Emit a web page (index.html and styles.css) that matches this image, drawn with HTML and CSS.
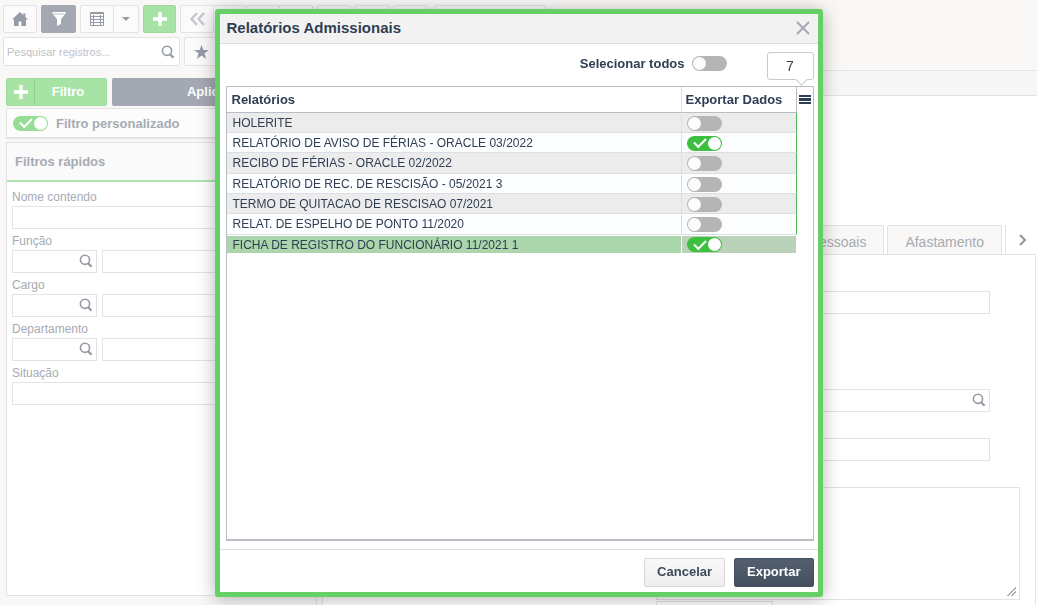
FILE: index.html
```
<!DOCTYPE html>
<html lang="pt-BR">
<head>
  <meta charset="UTF-8">
  <title>Relatórios Admissionais</title>
  <link rel="stylesheet" href="styles.css">
</head>

<body>

<svg class="sprite" width="0" height="0">
  <symbol id="lupa" viewBox="0 0 14 14">
    <circle cx="6" cy="5.8" r="4.6" fill="none" stroke="currentColor" stroke-width="1.6"/>
    <path d="M9 9.2l3.6 3.6" stroke="currentColor" stroke-width="2.2"/>
  </symbol>
  <symbol id="mais" viewBox="0 0 14 14">
    <path d="M7 0v14M0 7h14" stroke="currentColor" stroke-width="3.4"/>
  </symbol>
</svg>

<div class="page">
  <header class="toolbar">
    <div class="toolbar-row">
      <button class="tool" aria-label="Início">
        <svg width="16" height="14" viewBox="0 0 16 14"><path d="M8 0L0 7.6h2V14h4.6V9.4h2.8V14H14V7.6h2L13.3 5V1.2h-2v2z" fill="currentColor"/></svg>
      </button>
      <button class="tool tool-active" aria-label="Filtro">
        <svg width="14" height="14" viewBox="0 0 14 14"><path d="M.5 0h13v1.6L9 7.2V12l-4 2V7.2L.5 1.6z" fill="currentColor"/><path d="M1.5 2h10" stroke="#a3a8b2" stroke-width=".8"/></svg>
      </button>
      <div class="tool-group">
        <button class="tool" aria-label="Grade">
          <svg width="14" height="14" viewBox="0 0 14 14"><path d="M.5.5h13v13H.5zM0 1.5h14M0 4.5h14M0 7.5h14M0 10.5h14M3.5 3v11M10.5 3v11" fill="none" stroke="currentColor"/></svg>
        </button>
        <button class="tool tool-small" aria-label="Opções">
          <svg width="8" height="4" viewBox="0 0 8 4"><path d="M0 0h8L4 4z" fill="currentColor"/></svg>
        </button>
      </div>
      <button class="tool tool-add" aria-label="Adicionar">
        <svg width="14" height="14"><use href="#mais"/></svg>
      </button>
      <div class="tool-group">
        <button class="tool tool-off" aria-label="Primeiro">
          <svg width="15" height="14" viewBox="0 0 15 14"><path d="M7 1L1.6 7 7 13M14 1L8.6 7l5.4 6" fill="none" stroke="currentColor" stroke-width="2.6"/></svg>
        </button>
        <button class="tool" aria-label="Anterior"></button>
        <button class="tool" aria-label="Próximo"></button>
        <button class="tool" aria-label="Último"></button>
      </div>
      <button class="tool" aria-label="Editar"></button>
      <button class="tool" aria-label="Salvar"></button>
      <button class="tool" aria-label="Excluir"></button>
      <button class="tool tool-wide" aria-label="Ações"></button>
    </div>
    <div class="toolbar-row">
      <div class="search">
        <input type="text" aria-label="Pesquisar registros" placeholder="Pesquisar registros...">
        <svg width="14" height="14"><use href="#lupa"/></svg>
      </div>
      <div class="tool-group">
        <button class="tool" aria-label="Favoritos">
          <svg width="15" height="14" viewBox="0 0 15 14"><path d="M7.5 0l1.9 5H15l-4.5 3.3L12.200 14l-4.700-3.400L2.800 14l1.700-5.700L0 5h5.600z" fill="currentColor"/></svg>
        </button>
        <button class="tool" aria-label="Atualizar"></button>
      </div>
    </div>
  </header>

  <div class="content">
    <aside class="sidebar">
      <div class="filter-actions">
        <button class="btn-filtro"><svg width="14" height="14"><use href="#mais"/></svg><span>Filtro</span></button>
        <button class="btn-aplicar">Aplicar</button>
      </div>
      <label class="custom-filter">
        <input type="checkbox" class="switch switch-faded" checked>
        Filtro personalizado
      </label>
      <section class="quick">
        <h2>Filtros rápidos</h2>
        <div class="quick-fields">
          <label for="nome">Nome contendo</label>
          <input type="text" id="nome" class="field">
          <label for="funcao">Função</label>
          <div class="lookup">
            <div class="code"><input type="text" id="funcao" class="field"><svg width="14" height="14"><use href="#lupa"/></svg></div>
            <input type="text" class="field" aria-label="Descrição da função">
          </div>
          <label for="cargo">Cargo</label>
          <div class="lookup">
            <div class="code"><input type="text" id="cargo" class="field"><svg width="14" height="14"><use href="#lupa"/></svg></div>
            <input type="text" class="field" aria-label="Descrição do cargo">
          </div>
          <label for="departamento">Departamento</label>
          <div class="lookup">
            <div class="code"><input type="text" id="departamento" class="field"><svg width="14" height="14"><use href="#lupa"/></svg></div>
            <input type="text" class="field" aria-label="Descrição do departamento">
          </div>
          <label for="situacao">Situação</label>
          <input type="text" id="situacao" class="field">
        </div>
      </section>
    </aside>

    <main class="record">
      <div class="band"></div>
      <nav class="tabs">
        <a href="#" class="tab">Dados Pessoais</a>
        <a href="#" class="tab">Afastamento</a>
        <button class="tab-next" aria-label="Próximas abas">
          <svg width="8" height="12" viewBox="0 0 8 12"><path d="M1 1l5 5-5 5" fill="none" stroke="currentColor" stroke-width="2.2"/></svg>
        </button>
      </nav>
      <div class="record-panel">
        <div class="record-fields">
          <input type="text" class="field" aria-label="Nome">
          <input type="text" class="field field-short" aria-label="Código">
          <div class="code"><input type="text" class="field" aria-label="Empresa"><svg width="14" height="14"><use href="#lupa"/></svg></div>
          <input type="text" class="field" aria-label="Filial">
          <textarea class="field notes" aria-label="Observações"></textarea>
          <input type="text" class="field field-last" aria-label="Data">
        </div>
      </div>
    </main>
  </div>
</div>

<div class="overlay">
  <div class="modal" role="dialog" aria-labelledby="titulo">
    <div class="modal-header">
      <h1 id="titulo">Relatórios Admissionais</h1>
      <button class="close" aria-label="Fechar">
        <svg width="14" height="14" viewBox="0 0 14 14"><path d="M1 1l12 12M13 1L1 13" stroke="currentColor" stroke-width="2"/></svg>
      </button>
    </div>

    <div class="modal-top">
      <label for="todos">Selecionar todos</label>
      <input type="checkbox" id="todos" class="switch">
      <div class="count">7</div>
    </div>

    <div class="grid">
      <table>
        <thead>
          <tr>
            <th>Relatórios</th>
            <th class="col-export">Exportar Dados</th>
            <th class="col-menu">
              <button aria-label="Colunas"><svg width="12" height="9" viewBox="0 0 12 9"><path d="M0 0h12v2H0zM0 3h12v3H0zM0 7h12v2H0z" fill="currentColor"/></svg></button>
            </th>
          </tr>
        </thead>
        <tbody>
          <tr><td>HOLERITE</td><td><input type="checkbox" class="switch" aria-label="Exportar HOLERITE"></td></tr>
          <tr><td>RELATÓRIO DE AVISO DE FÉRIAS - ORACLE 03/2022</td><td><input type="checkbox" class="switch" aria-label="Exportar aviso de férias" checked></td></tr>
          <tr><td>RECIBO DE FÉRIAS - ORACLE 02/2022</td><td><input type="checkbox" class="switch" aria-label="Exportar recibo de férias"></td></tr>
          <tr><td>RELATÓRIO DE REC. DE RESCISÃO - 05/2021 3</td><td><input type="checkbox" class="switch" aria-label="Exportar rec. de rescisão"></td></tr>
          <tr><td>TERMO DE QUITACAO DE RESCISAO 07/2021</td><td><input type="checkbox" class="switch" aria-label="Exportar termo de quitação"></td></tr>
          <tr><td>RELAT. DE ESPELHO DE PONTO 11/2020</td><td><input type="checkbox" class="switch" aria-label="Exportar espelho de ponto"></td></tr>
          <tr class="selected"><td>FICHA DE REGISTRO DO FUNCIONÁRIO 11/2021 1</td><td><input type="checkbox" class="switch" aria-label="Exportar ficha de registro" checked></td></tr>
        </tbody>
      </table>
    </div>

    <div class="modal-footer">
      <button class="btn btn-cancelar">Cancelar</button>
      <button class="btn btn-exportar">Exportar</button>
    </div>
  </div>
</div>

</body>
</html>
```

FILE: styles.css
```
* {
  box-sizing: border-box;
}
body {
  margin: 0;
  background: #f9f8f7;
  font-family: "Liberation Sans", Arial, sans-serif;
  font-size: 12px;
  color: #2f3e52;
}
h1, h2 {
  margin: 0;
}
button, input, textarea {
  font-family: inherit;
  margin: 0;
}
svg {
  display: block;
}
.sprite {
  position: absolute;
}
.page {
  height: 100vh;
  display: flex;
  flex-direction: column;
  overflow: hidden;
  color: #a6abb3;
}

/* toolbar */
.toolbar {
  display: flex;
  flex-direction: column;
  gap: 4px;
  padding: 5px 3px 4px;
}
.toolbar-row {
  display: flex;
  gap: 4px;
}
.tool-group {
  display: flex;
}
.tool {
  display: flex;
  align-items: center;
  justify-content: center;
  width: 34px;
  min-height: 28px;
  padding: 0;
  border: 1px solid #e3e3e3;
  border-radius: 2px;
  background: #fbfbfb;
  color: #959ba6;
}
.tool-group .tool + .tool {
  margin-left: -1px;
}
.tool-group .tool-small {
  width: 26px;
}
.tool-active {
  width: 35px;
  background: #a3a8b2;
  border-color: #a3a8b2;
  color: #fff;
}
.tool-add {
  width: 33px;
  background: #a8e3a6;
  border-color: #9cda9a;
  color: #fff;
}
.tool-off {
  color: #c6cad0;
}
.tool-wide {
  width: 110px;
  margin-left: 4px;
}
.search {
  display: flex;
  align-items: center;
  width: 177px;
  height: 29px;
  padding: 0 4px 0 3px;
  border: 1px solid #e3e3e3;
  border-radius: 2px;
  background: #fff;
  color: #959ba6;
}
.search input {
  flex: 1;
  min-width: 0;
  padding: 0;
  border: none;
  background: none;
  font-size: 11px;
}
.search input::placeholder {
  color: #bfc2c6;
}

/* filtros */
.content {
  flex: 1;
  min-height: 0;
  display: flex;
  gap: 5px;
}
.sidebar {
  display: flex;
  flex-direction: column;
  width: 317px;
  padding: 8px 0 9px 6px;
  border-right: 1px solid #e3e3e3;
}
.filter-actions {
  display: flex;
  gap: 5px;
  height: 28px;
}
.filter-actions button {
  border-radius: 2px;
  color: #fff;
  font-size: 13px;
  font-weight: bold;
}
.btn-filtro {
  display: flex;
  align-items: center;
  width: 101px;
  padding: 0 5px 0 0;
  border: 1px solid #9fdd9d;
  background: #a8e3a6;
}
.btn-filtro svg {
  margin: 0 6px 0 7px;
}
.btn-filtro span {
  flex: 1;
  line-height: 26px;
  border-left: 1px solid #8fd08d;
}
.btn-aplicar {
  flex: 1;
  padding: 0 10px 2px 0;
  border: none;
  background: #a3a8b2;
}
.custom-filter {
  display: flex;
  align-items: center;
  gap: 8px;
  height: 31px;
  margin: 2px 0 3px;
  padding-left: 6px;
  border: 1px solid #e3e3e3;
  border-bottom-width: 2px;
  background: #fcfcfc;
  font-size: 13px;
  font-weight: bold;
}
.quick {
  flex: 1;
  border: 1px solid #e3e3e3;
  border-right: none;
  background: #fff;
}
.quick h2 {
  padding-left: 8px;
  border-bottom: 2px solid #aee3ae;
  background: #fafafa;
  font-size: 13px;
  line-height: 37px;
}
.quick-fields {
  display: flex;
  flex-direction: column;
  padding: 3px 5px;
}
.quick-fields label {
  height: 21px;
  line-height: 24px;
}
.field {
  width: 100%;
  height: 23px;
  border: 1px solid #e3e3e3;
  background: #fff;
}
.lookup {
  display: flex;
  gap: 5px;
}
.code {
  display: grid;
  align-items: center;
  color: #959ba6;
}
.code > * {
  grid-area: 1 / 1;
}
.code svg {
  justify-self: end;
  margin: 0 4px 2px 0;
}
.lookup .code {
  flex: 0 0 85px;
}

/* cadastro */
.record {
  flex: 1;
  min-width: 0;
  display: flex;
  flex-direction: column;
  background: #fff;
  border-left: 1px solid #e3e3e3;
}
.band {
  flex: 0 0 26px;
  margin-bottom: 129px;
  border: solid #e3e3e3;
  border-width: 1px 0;
  background: #f7f7f7;
}
.tabs {
  display: flex;
  justify-content: flex-end;
  gap: 3px;
  height: 29px;
}
.tab {
  padding: 0 17px;
  border: 1px solid #e3e3e3;
  border-bottom: none;
  border-radius: 2px 2px 0 0;
  background: #f9f8f7;
  color: #a6abb3;
  font-size: 14px;
  line-height: 32px;
  text-decoration: none;
}
.tab-next {
  width: 32px;
  padding: 0 0 0 13px;
  border: none;
  border-left: 1px solid #e3e3e3;
  background: #fff;
  color: #959ba6;
}
.record-panel {
  flex: 1;
  min-height: 0;
  display: grid;
  grid-template-columns: 333px 1fr;
  margin-right: 1px;
  border: solid #e3e3e3;
  border-width: 1px 1px 0 0;
}
.record-fields {
  grid-column: 2;
  display: flex;
  flex-direction: column;
  gap: 26px;
  padding: 36px 45px 0 0;
}
.record-fields .field-short {
  width: 30%;
}
.record-fields .notes {
  flex: none;
  width: calc(100% + 30px);
  height: 113px;
}
.notes::-webkit-resizer {
  background: linear-gradient(135deg, #fff 48%, #aaa 48%, #aaa 56%, #fff 56%, #fff 72%, #aaa 72%, #aaa 80%, #fff 80%) center / 9px 9px no-repeat;
}
.record-fields .field-last {
  flex: none;
  width: 117px;
  margin-top: -25px;
}

/* chave liga/desliga */
.switch {
  appearance: none;
  display: flex;
  align-items: center;
  flex: none;
  width: 35px;
  height: 15px;
  padding: 1px;
  border-radius: 8px;
  background: #b5b5b5;
}
.switch::after {
  content: "";
  width: 13px;
  height: 13px;
  border-radius: 50%;
  background: #fcfcfc;
}
.switch:checked {
  justify-content: space-between;
  padding-left: 7px;
  background: #3dbf40;
}
.switch:checked::before {
  content: "";
  width: 10px;
  height: 5px;
  margin-bottom: 3px;
  border: solid #fff;
  border-width: 0 0 2px 2px;
  transform: rotate(-45deg);
}
.switch:checked::after {
  background: #fff;
}
.switch-faded:checked {
  background: #97dd96;
}

/* modal */
.overlay {
  position: fixed;
  inset: 0;
  display: flex;
  justify-content: center;
  padding: 9px 8px 8px;
}
.modal {
  display: flex;
  flex-direction: column;
  width: 100%;
  max-width: 608px;
  border: 5px solid #66cf66;
  border-radius: 3px;
  background: #fff;
  box-shadow: 0 2px 18px rgba(0, 0, 0, 0.3);
}
.modal-header {
  display: flex;
  align-items: center;
  justify-content: space-between;
  height: 30px;
  padding: 0 8px 2px 7px;
  border-bottom: 1px solid #dedede;
  background: #f2f2f2;
}
.modal-header h1 {
  font-size: 15px;
}
.close {
  padding: 0;
  border: none;
  background: none;
  color: #a3a8b2;
}
.modal-top {
  display: flex;
  align-items: flex-start;
  justify-content: flex-end;
  height: 42px;
  padding: 8px 4px 0 6px;
}
.modal-top label {
  margin-right: 7px;
  font-size: 13px;
  font-weight: bold;
  line-height: 23px;
}
.modal-top .switch {
  margin-top: 4px;
}
.count {
  position: relative;
  width: 47px;
  height: 28px;
  margin-left: 40px;
  border: 1px solid #c9c9c9;
  border-radius: 3px;
  font-size: 14px;
  line-height: 27px;
  text-align: center;
}
.count::after {
  content: "";
  position: absolute;
  right: 7px;
  bottom: -5px;
  width: 8px;
  height: 8px;
  border: solid #c9c9c9;
  border-width: 0 1px 1px 0;
  background: #fff;
  transform: rotate(45deg);
}
.grid {
  flex: 1;
  margin: 0 4px 8px 6px;
  border: 1px solid #b9bec5;
  border-bottom-width: 2px;
}
table {
  width: 100%;
  border-collapse: separate;
  border-spacing: 0;
  table-layout: fixed;
}
th {
  height: 26px;
  padding: 0 4px 0 5px;
  border-right: 1px solid #dcdfe3;
  border-bottom: 1px solid #b9bec5;
  font-size: 13px;
  text-align: left;
}
.col-export {
  width: 115px;
  padding-left: 4px;
  border-right-color: #b9bec5;
}
.col-menu {
  width: 16px;
  padding: 0 0 2px 2px;
  border: none;
}
.col-menu button {
  display: block;
  padding: 0;
  border: none;
  background: none;
  color: #2f3e52;
}
td {
  height: 20px;
  padding: 0 5px;
  border-right: 1px solid #dcdfe3;
  border-bottom: 1px solid #dcdfe3;
  background: #fbfdff;
  line-height: 16px;
}
td:first-child {
  padding-left: 6px;
}
tr:nth-child(3n) td {
  height: 21px;
}
tr:nth-child(odd) td {
  background: #ececec;
}
td:last-child {
  padding-top: 1px;
  border-right-color: #4db84f;
}
tbody .selected td {
  height: 18px;
  padding-top: 0;
  border-top: 1px solid #fff;
  border-right-color: #fff;
  border-bottom: none;
  background: #abd6ab;
}
tbody .selected td:last-child {
  background: #bad1ba;
}
.modal-footer {
  display: flex;
  justify-content: flex-end;
  gap: 9px;
  padding: 8px 4px 5px;
  border-top: 1px solid #dedede;
}
.btn {
  height: 29px;
  padding: 0 12px 2px;
  border-radius: 2px;
  font-size: 13px;
  font-weight: bold;
}
.btn-cancelar {
  border: 1px solid #d6d6d6;
  background: linear-gradient(#f8f8f8, #efefef);
  color: #3c495b;
}
.btn-exportar {
  border: 1px solid #465160;
  background: linear-gradient(#535f70, #45505e);
  color: #fff;
}
```
